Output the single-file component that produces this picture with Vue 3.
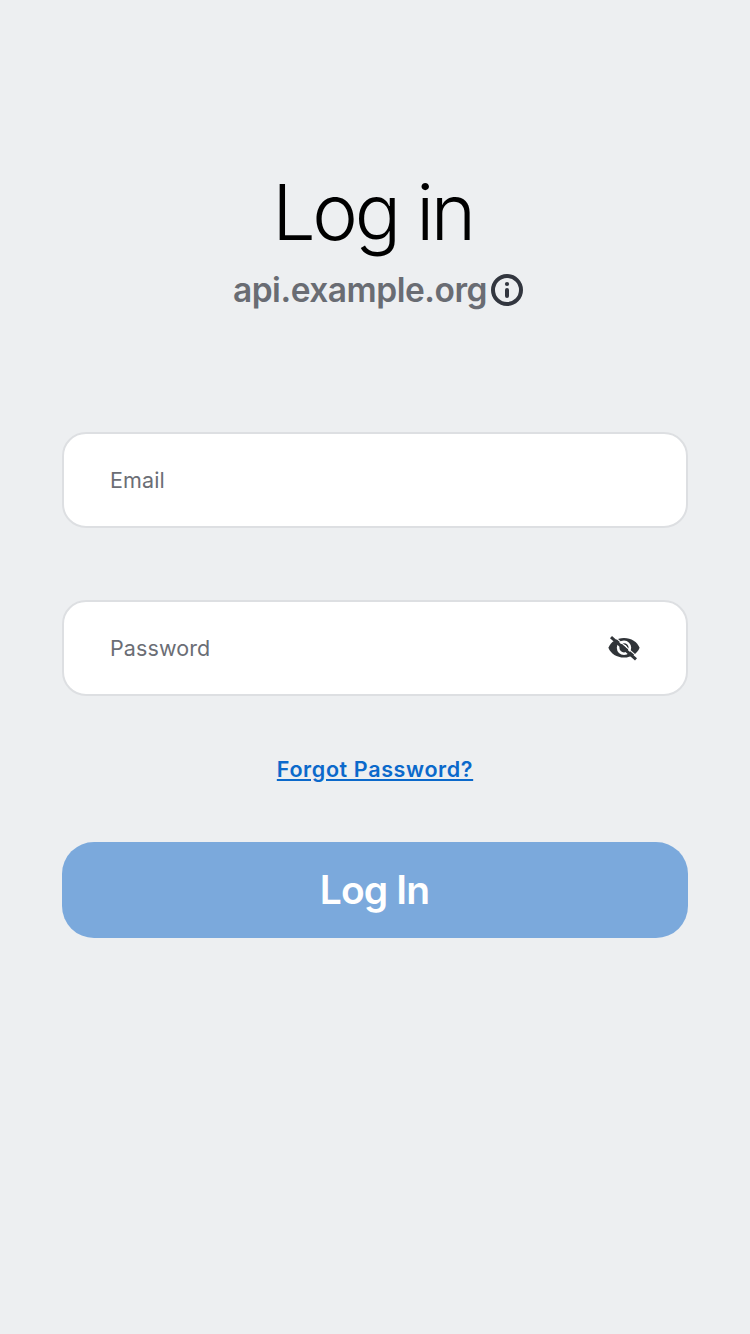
<script setup>
import { ref } from 'vue'

const email = ref('')
const password = ref('')
const visible = ref(false)
</script>

<template>
  <main class="screen">
    <h1 class="title"><span>Log in</span></h1>
    <div class="server">
      <span class="host">api.example.org</span>
      <svg class="info" viewBox="0 0 32 32" aria-hidden="true">
        <circle cx="16" cy="16" r="14" fill="none" stroke="#32363f" stroke-width="4" />
        <circle cx="16" cy="10" r="2.1" fill="#32363f" />
        <path d="M16 16v6" stroke="#32363f" stroke-width="4" stroke-linecap="round" />
      </svg>
    </div>
    <form class="form" @submit.prevent>
      <label class="field">
        <input v-model="email" type="text" placeholder="Email" />
      </label>
      <label class="field">
        <input v-model="password" class="pw" :type="visible ? 'text' : 'password'" placeholder="Password" />
        <button class="toggle" type="button" aria-label="Toggle password" @click="visible = !visible">
          <svg class="eye" viewBox="0 0 32 26" aria-hidden="true">
            <path d="M0.4 12.800C2.800 6.800 8.700 3 16 3s13.200 3.800 15.600 9.800C29.200 18.800 23.300 22.600 16 22.600S2.800 18.800 .4 12.800Z" fill="#303438" />
            <circle cx="16" cy="12.800" r="5.900" fill="none" stroke="#fff" stroke-width="2.600" />
            <path d="M15.800 10a3 3 0 0 1 3 3" fill="none" stroke="#fff" stroke-width="1" />
            <path d="M5.400 .6L30 22.400" stroke="#fff" stroke-width="1.200" />
            <path d="M3 2.200L28 24.400" stroke="#303438" stroke-width="3" />
          </svg>
        </button>
      </label>
      <a class="forgot" href="#"><span>Forgot Password?</span></a>
      <button class="submit" type="submit"><span>Log In</span></button>
    </form>
  </main>
</template>

<style>
body {
  background: #edeff1;
}
</style>

<style scoped>
.screen {
  box-sizing: border-box;
  min-height: 1334px;
  padding: 164px 62px 0;
  background: #edeff1;
  font-family: Inter, "Liberation Sans", sans-serif;
  display: flex;
  flex-direction: column;
}
.title {
  margin: 0;
  height: 96px;
  padding-right: 5px;
  line-height: 97px;
  font-size: 77px;
  font-weight: 320;
  letter-spacing: -3.3px;
  text-align: center;
  color: #000;
}
.server {
  display: flex;
  justify-content: center;
  align-items: center;
  height: 44px;
  margin: 8px 0 0 6px;
  gap: 4px;
}
.host {
  font-size: 33.5px;
  line-height: 44px;
  font-weight: 600;
  color: #696c73;
  letter-spacing: -0.47px;
}
.info {
  width: 32px;
  height: 32px;
}
.form {
  margin-top: 120px;
  display: flex;
  flex-direction: column;
}
.field {
  box-sizing: border-box;
  display: flex;
  align-items: center;
  height: 96px;
  margin-bottom: 72px;
  padding: 0 46px;
  border: 2px solid #dddfe2;
  border-radius: 24px;
  background: #fff;
}
.field input {
  flex: 1;
  min-width: 0;
  height: 60px;
  padding: 0;
  border: 0;
  outline: 0;
  background: transparent;
  font: 400 21.5px/28px Inter, "Liberation Sans", sans-serif;
  letter-spacing: 0.1px;
  color: #303438;
}
.field input::placeholder {
  color: #6b6e75;
  opacity: 1;
}
.toggle {
  display: flex;
  padding: 0;
  border: 0;
  background: none;
}
.eye {
  width: 32px;
  height: 26px;
}
.forgot {
  align-self: center;
  margin-top: -17px;
  height: 36px;
  line-height: 36px;
  font-size: 21.5px;
  font-weight: 600;
  letter-spacing: 0.63px;
  color: #0b69cb;
  text-decoration: underline;
  text-decoration-thickness: 2px;
  text-underline-offset: 2px;
}
.submit {
  height: 96px;
  margin-top: 55px;
  padding: 0 1px 0 0;
  border: 0;
  border-radius: 32px;
  background: #7ba9dc;
  font: 600 39px/96px Inter, "Liberation Sans", sans-serif;
  letter-spacing: -0.9px;
  color: #fff;
}
</style>
